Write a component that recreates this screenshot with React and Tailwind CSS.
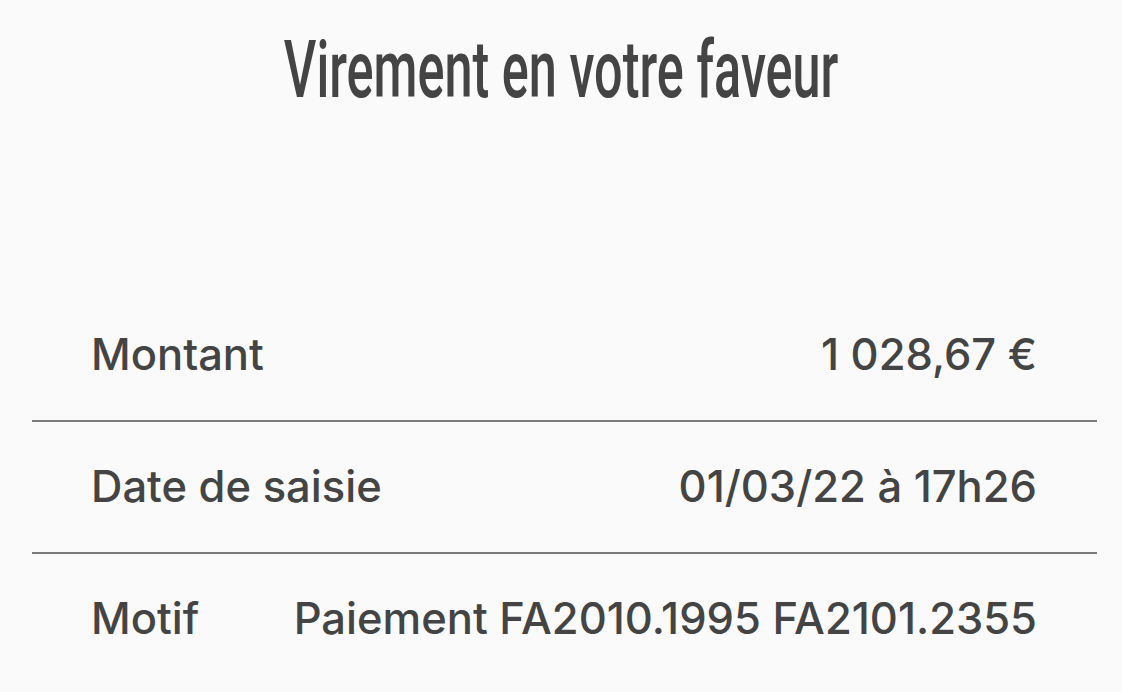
const rows = [
  { label: 'Montant', value: '1 028,67 €' },
  { label: 'Date de saisie', value: '01/03/22 à 17h26' },
  { label: 'Motif', value: 'Paiement FA2010.1995 FA2101.2355' },
];

export default function App() {
  return (
    <div
      className="min-h-[692px] w-full bg-[#fafafa] text-[#444444] overflow-hidden"
      style={{ fontFamily: 'Inter, "Noto Sans", sans-serif' }}
    >
      {/* Title */}
      <div className="h-[290px] pt-[22px] flex justify-center">
        <h1
          className="inline-block whitespace-nowrap text-[80px] leading-[96px] font-medium scale-x-[0.63]"
          style={{ fontFamily: 'Roboto, "Liberation Sans", sans-serif' }}
        >
          Virement en votre faveur
        </h1>
      </div>

      {/* Details */}
      <div className="ml-[32px] mr-[25px]">
        {rows.map((row, i) => (
          <div key={row.label}>
            {i > 0 && <div className="h-[2px] bg-[#7a7a7a]" />}
            <div className="h-[130px] pl-[59px] pr-[60px] flex items-center justify-between gap-6 text-[43.5px] font-medium">
              <span className="whitespace-nowrap">{row.label}</span>
              <span className="whitespace-nowrap">{row.value}</span>
            </div>
          </div>
        ))}
      </div>
    </div>
  );
}
